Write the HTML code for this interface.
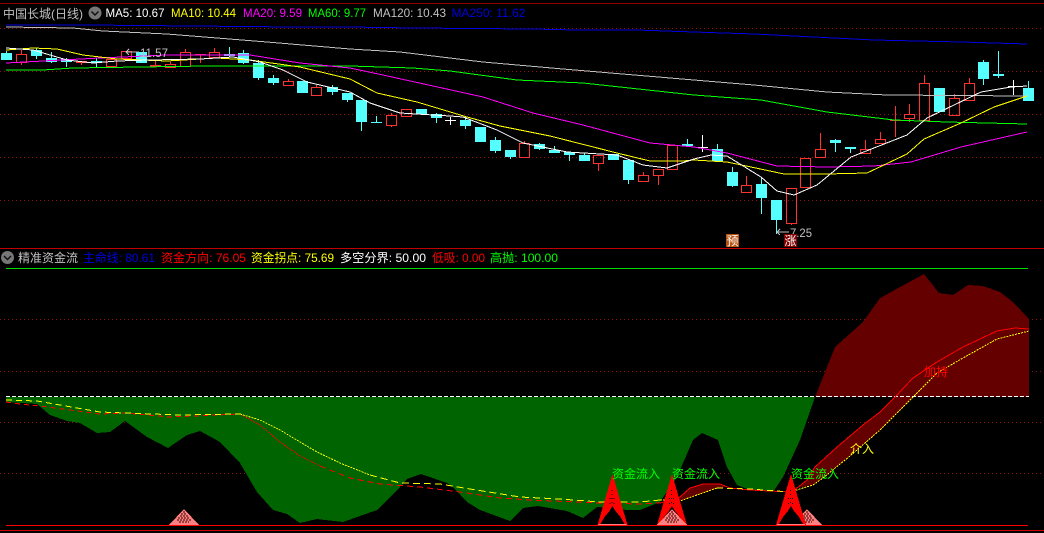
<!DOCTYPE html>
<html><head><meta charset="utf-8"><style>
html,body{margin:0;padding:0;background:#000;width:1044px;height:533px;overflow:hidden}
svg{display:block}
text{font-family:"Liberation Sans","WenQuanYi Zen Hei","Noto Sans CJK SC",sans-serif;font-size:12px}
</style></head><body>
<svg width="1044" height="533" viewBox="0 0 1044 533" xmlns="http://www.w3.org/2000/svg">
<defs>
<g id="pink" shape-rendering="crispEdges">
<path d="M0 0L15 16H-15Z" fill="#ff8080"/>
<path d="M-1 3h2M-3 5h6M-4 7h8M-6 9h12M-7 11h14M-5 13h10" stroke="#300000" stroke-width="1" stroke-dasharray="2 1" fill="none"/>
</g>
<g id="spike" shape-rendering="crispEdges">
<path d="M0 0L15 51H-15Z" fill="#ff0000"/>
<path d="M0 32L-3 37L-8 43L-12 50H12L8 43L3 37Z" fill="#000"/>
<path d="M-.5 16V32" stroke="#000" stroke-width="1" stroke-dasharray="1 3" fill="none"/>
<path d="M-2.500 24V33M1.500 24V33" stroke="#000" stroke-width="1" stroke-dasharray="1 4" fill="none"/>
<path d="M-14 50.500H14" stroke="#ff8080" fill="none"/>
</g>
</defs>
<rect width="1044" height="533" fill="#000"/>
<path d="M0 3.500H1044" stroke="#900000"/>
<path d="M0 248.500H1044" stroke="#c00000"/>
<g stroke="#901010" stroke-dasharray="1 3" fill="none" shape-rendering="crispEdges">
<path d="M0 28.500H1044M0 71.500H1044M0 114.500H1044M0 157.500H1044M0 200.500H1044M0 319.500H1044M0 371.500H1044M0 422.500H1044M0 473.500H1044"/>
</g>

<!-- candles -->
<g shape-rendering="crispEdges">
<path fill="none" stroke="#55ffff" d="M6.500 51V53M36.500 48V59M51.500 52V63M66.500 58V67M96.500 58V68M229.500 47V57M243.500 50V64M258.500 60V80M273.500 75V85M332.500 85V95M347.500 93V102M361.500 100V131M376.500 116V123M436.500 113V123M465.500 117V129M495.500 137V153M510.500 150V159M539.500 143V150M554.500 146V153M569.500 152V161M584.500 153V161M628.500 159V184M687.500 139V146M717.500 144V161M732.500 167V187M761.500 177V214M776.500 200V234M835.500 139V152M850.500 147V153M983.500 60V85M998.500 51V78M1028.500 81V88"/>
<path fill="#55ffff" d="M1 53h11v7h-11zM31 50h11v6h-11zM46 58h11v4h-11zM61 59h11v3h-11zM91 61h11v2h-11zM136 52h11v11h-11zM224 54h11v2h-11zM238 53h11v10h-11zM253 63h11v15h-11zM268 78h11v5h-11zM297 81h11v12h-11zM327 87h11v5h-11zM342 93h11v7h-11zM356 100h11v22h-11zM371 122h11v1h-11zM416 109h11v5h-11zM431 114h11v4h-11zM460 120h11v6h-11zM475 127h11v15h-11zM490 140h11v11h-11zM505 150h11v7h-11zM534 144h11v5h-11zM549 150h11v3h-11zM564 152h11v3h-11zM579 155h11v6h-11zM608 154h11v6h-11zM623 160h11v20h-11zM682 144h11v2h-11zM712 149h11v12h-11zM727 172h11v14h-11zM756 184h11v14h-11zM771 200h11v20h-11zM830 140h11v3h-11zM845 147h11v2h-11zM934 88h11v24h-11zM978 62h11v17h-11zM993 74h11v2h-11zM1023 88h11v13h-11z"/>
<path fill="#ff3232" fill-rule="evenodd" d="M16 54h11v9h-11zM17 55h9v7h-9zM106 59h11v8h-11zM107 60h9v6h-9zM121 51h11v8h-11zM122 52h9v6h-9zM165 64h11v4h-11zM166 65h9v2h-9zM180 52h11v15h-11zM181 53h9v13h-9zM209 52h11v6h-11zM210 53h9v4h-9zM283 81h11v5h-11zM284 82h9v3h-9zM311 87h11v9h-11zM312 88h9v7h-9zM386 115h11v11h-11zM387 116h9v9h-9zM401 109h11v8h-11zM402 110h9v6h-9zM519 143h11v15h-11zM520 144h9v13h-9zM593 155h11v9h-11zM594 156h9v7h-9zM638 175h11v7h-11zM639 176h9v5h-9zM653 169h11v7h-11zM654 170h9v5h-9zM667 145h11v25h-11zM668 146h9v23h-9zM741 185h11v8h-11zM742 186h9v6h-9zM786 188h11v36h-11zM787 189h9v34h-9zM800 158h11v30h-11zM801 159h9v28h-9zM815 149h11v9h-11zM816 150h9v7h-9zM860 149h11v5h-11zM861 150h9v3h-9zM875 139h11v5h-11zM876 140h9v3h-9zM904 114h11v5h-11zM905 115h9v3h-9zM919 83h11v38h-11zM920 84h9v36h-9zM949 98h11v18h-11zM950 99h9v16h-9zM964 83h11v18h-11zM965 84h9v16h-9z"/>
<path fill="none" stroke="#ff3232" d="M21.500 50V54M21.500 62V65M170.500 62V64M185.500 49V52M214.500 48V52M214.500 57V58M316.500 85V87M391.500 113V115M391.500 125V127M406.500 116V117M524.500 141V143M598.500 163V171M643.500 172V175M658.500 175V185M672.500 169V170M746.500 176V185M791.500 223V225M820.500 133V149M865.500 140V149M880.500 132V139M909.500 104V114M909.500 118V122M924.500 75V83M954.500 94V98M969.500 78V83M890 120.500h11M895.500 106V137M195 54.500h11M200.500 54V63M288.500 79V81"/>
<path fill="#ff3232" d="M76 61h11v2h-11zM81 63h1v2h-1zM150 65h11v2h-11zM155 60h1v5h-1z"/>
<path fill="none" stroke="#fff" d="M445 120.500h11M450.500 117V125M697 147.500h11M702.500 135V152M1008 86.500h11M1013.500 80V95"/>
</g>

<!-- MAs -->
<g fill="none" stroke-width="1" shape-rendering="crispEdges" stroke-linejoin="round">
<polyline stroke="#0000e0" points="6,25 88,25 192,26 295,27 350,27 413,28 532,29 577,30 636,30 694,32 754,34 814,37 874,40 961,42 1027,44"/>
<polyline stroke="#c0c0c0" points="6,27 73,28 103,31 167,34 267,42 350,49 400,52 483,62 563,69 694,80 754,85 827,92 887,95 1027,96"/>
<polyline stroke="#00ff00" points="6,70 43,70 73,68 207,66 350,66 413,68 450,71 517,80 583,83 694,95 761,100 827,112 894,120 947,122 1027,124"/>
<polyline stroke="#ff00ff" points="6,63 43,61 100,58 167,55 250,55 300,63 350,68 383,75 433,86 483,97 533,113 583,125 650,143 694,147 727,153 777,166 827,167 874,166 911,162 961,147 1027,132"/>
<polyline stroke="#ffff00" points="6,50 33,48 57,49 83,55 117,59 167,61 217,58 250,60 300,67 350,79 377,93 417,102 467,117 500,126 550,136 617,153 650,161 683,161 694,160 727,162 751,167 784,174 827,174 867,173 907,154 924,139 961,123 994,107 1027,96"/>
<polyline stroke="#ffffff" points="6,48 33,50 67,60 93,63 117,61 150,60 200,59 233,57 260,62 283,70 307,82 350,92 370,103 400,113 450,116 463,117 497,130 523,143 567,152 617,155 643,165 667,168 694,159 711,155 727,156 761,177 777,191 794,195 817,185 851,157 907,135 927,118 981,92 1011,87 1027,86"/>
</g>

<text x="3" y="18" fill="#c0c0c0">中国长城(日线)</text>
<circle cx="95" cy="13" r="6.500" fill="#777"/>
<path d="M91.500 11.500L95 15L98.500 11.500" stroke="#111" stroke-width="1.500" fill="none"/>
<text x="105.500" y="17" fill="#fff" textLength="59" lengthAdjust="spacingAndGlyphs">MA5: 10.67</text>
<text x="171" y="17" fill="#ff0" textLength="65" lengthAdjust="spacingAndGlyphs">MA10: 10.44</text>
<text x="243" y="17" fill="#f0f" textLength="59" lengthAdjust="spacingAndGlyphs">MA20: 9.59</text>
<text x="308" y="17" fill="#0f0" textLength="58" lengthAdjust="spacingAndGlyphs">MA60: 9.77</text>
<text x="373" y="17" fill="#c0c0c0" textLength="73" lengthAdjust="spacingAndGlyphs">MA120: 10.43</text>
<text x="451.500" y="17" fill="#0000e0" textLength="74" lengthAdjust="spacingAndGlyphs">MA250: 11.62</text>

<path d="M129 49L126 52L129 55M126 52H139" stroke="#c0c0c0" fill="none" shape-rendering="crispEdges"/>
<text x="140" y="57" fill="#c0c0c0" textLength="28" lengthAdjust="spacingAndGlyphs">11.57</text>
<path d="M780 229L777 232L780 235M777 232H789" stroke="#c0c0c0" fill="none" shape-rendering="crispEdges"/>
<text x="790" y="237" fill="#c0c0c0" textLength="22" lengthAdjust="spacingAndGlyphs">7.25</text>
<rect x="726" y="234" width="13" height="13" fill="#b8500f"/>
<text x="726.500" y="245" fill="#fff">预</text>
<rect x="784" y="234" width="13" height="13" fill="#800000"/>
<text x="784.500" y="245" fill="#fff">涨</text>

<!-- sub window header -->
<circle cx="7.500" cy="257.500" r="6.500" fill="#777"/>
<path d="M4 256L7.500 259.500L11 256" stroke="#111" stroke-width="1.500" fill="none"/>
<text x="18" y="262" fill="#c0c0c0">精准资金流</text>
<text x="83" y="262" fill="#0000e0" textLength="72" lengthAdjust="spacingAndGlyphs">主命线: 80.61</text>
<text x="161" y="262" fill="#f00" textLength="85" lengthAdjust="spacingAndGlyphs">资金方向: 76.05</text>
<text x="251" y="262" fill="#ff0" textLength="83" lengthAdjust="spacingAndGlyphs">资金拐点: 75.69</text>
<text x="340" y="262" fill="#fff" textLength="86" lengthAdjust="spacingAndGlyphs">多空分界: 50.00</text>
<text x="432" y="262" fill="#f00" textLength="53" lengthAdjust="spacingAndGlyphs">低吸: 0.00</text>
<text x="490" y="262" fill="#0f0" textLength="68" lengthAdjust="spacingAndGlyphs">高抛: 100.00</text>
<path d="M6 268.500H1028" stroke="#00e000" shape-rendering="crispEdges"/>

<!-- areas -->
<g shape-rendering="crispEdges">
<path fill="#006400" d="M6 397L6 402 37 404 50 415 67 421 80 423 97 433 110 432 125 421 147 437 168 448 187 435 200 431 220 442 240 463 257 492 273 510 287 514 300 523 317 519 325 520 343 522 377 510 400 487 407 479 421 474 447 483 453 487 467 502 480 510 510 521 523 508 538 506 567 511 583 518 597 507 612 508 627 510 640 510 660 502 677 477 693 440 702 433 718 440 727 467 737 485 750 490 773 492 783 477 800 440 815 397Z"/>
<path fill="#640000" d="M815 397L835 347 863 322 880 298 924 274 939 293 953 295 968 285 983 286 1000 292 1013 302 1029 319V397Z"/>
<path fill="#640000" d="M797 488L807 480 815 467 837 447 863 425 880 412 895 397H913L880 430 850 456 823 478 813 485Z"/>
<path fill="#640000" d="M672 501L680 497 690 488 703 484 720 484 730 488 727 487 717 488 697 495 680 501Z"/>
</g>
<path d="M6 396.500H1029" stroke="#fff" stroke-dasharray="4 2" shape-rendering="crispEdges"/>

<g fill="none" shape-rendering="crispEdges">
<polyline stroke="#ff0000" stroke-dasharray="5 4" points="6,402 20,404 40,406 70,410 100,414 125,413 170,417 240,414"/>
<polyline stroke="#ff0000" stroke-dasharray="2 1" points="240,414 260,425 280,442 300,456 320,466"/>
<polyline stroke="#ff0000" stroke-dasharray="6 4" points="320,466 350,478 380,484 420,487 460,492 500,498 530,500 600,503 640,504 660,503"/>
<polyline stroke="#ff0000" points="660,503 680,497 690,488 703,484 720,484 730,488 750,490 790,492 797,488 807,480 815,467 837,447 863,425 880,412 895,397 913,378 937,362 963,347 997,331 1015,328 1029,329"/>
<polyline stroke="#ffff00" stroke-dasharray="6 4" points="6,400 37,401 60,405 100,412 125,413 180,415 240,414"/>
<polyline stroke="#ffff00" stroke-dasharray="2 1" points="240,414 260,420 280,430 300,442 317,452 340,463 370,475"/>
<polyline stroke="#ffff00" stroke-dasharray="7 4" points="370,475 400,483 440,484 470,489 520,497 560,499 600,502 640,502 660,500"/>
<polyline stroke="#ffff00" stroke-dasharray="2 1" points="660,500 680,501 697,495 717,488"/>
<polyline stroke="#ffff00" stroke-dasharray="6 4" points="717,488 750,489 790,492"/>
<polyline stroke="#ffff00" stroke-dasharray="2 1" points="790,492 813,485 823,478 850,456 880,430 913,397 937,373 963,358 997,339 1029,331"/>
</g>

<path d="M0 530.500H1044" stroke="#d00000" shape-rendering="crispEdges"/>

<use href="#pink" x="184" y="509"/>
<use href="#spike" x="612.500" y="474"/>
<use href="#spike" x="672" y="474"/>
<use href="#pink" x="672" y="509"/>
<use href="#pink" x="807" y="509"/>
<use href="#spike" x="791" y="474"/>
<path d="M6 525.500H1028" stroke="#f00" shape-rendering="crispEdges"/>

<text x="612" y="478" fill="#00ff00">资金流入</text>
<text x="672" y="478" fill="#00ff00">资金流入</text>
<text x="791" y="478" fill="#00ff00">资金流入</text>
<text x="850" y="453" fill="#ffff00">介入</text>
<text x="924" y="376" fill="#ff0000">加持</text>
</svg>
</body></html>
